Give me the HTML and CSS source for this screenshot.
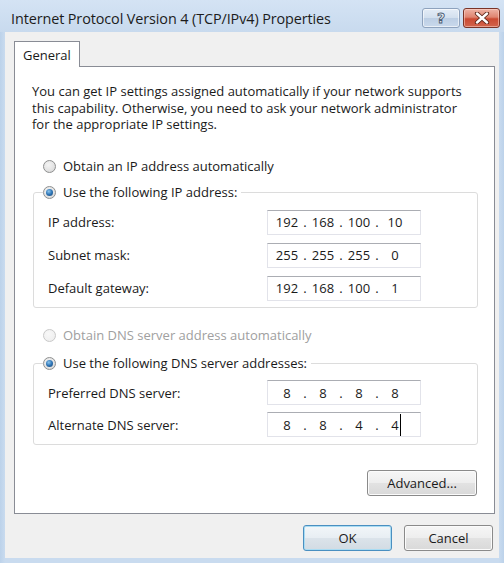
FILE: index.html
```html
<!DOCTYPE html>
<html>
<head>
<meta charset="utf-8">
<link rel="stylesheet" href="styles.css">
</head>
<body>
<div class="window">
  <div class="titlebar">
    <span class="title">Internet Protocol Version 4 (TCP/IPv4) Properties</span>
    <div class="caption-buttons">
      <span class="cbtn help">?</span>
      <span class="cbtn close">
        <svg width="16" height="12" viewBox="0 0 16 12">
          <path d="M3 1.5 L13 10.5 M13 1.5 L3 10.5" stroke="#5a2418" stroke-width="4.2" stroke-linecap="round"/>
          <path d="M3 1.5 L13 10.5 M13 1.5 L3 10.5" stroke="#ffffff" stroke-width="2.4" stroke-linecap="round"/>
        </svg>
      </span>
    </div>
  </div>
  <div class="client">
    <div class="tabs"><div class="tab">General</div></div>
    <div class="panel">
      <p class="intro">You can get IP settings assigned automatically if your network supports<br>this capability. Otherwise, you need to ask your network administrator<br>for the appropriate IP settings.</p>

      <div class="option opt-first"><span class="radio"></span><span>Obtain an IP address automatically</span></div>

      <fieldset class="group group-ip">
        <legend class="option"><span class="radio checked"></span><span>Use the following IP address:</span></legend>
        <div class="row">
          <span class="lbl">IP address:</span>
          <div class="ipbox"><span class="seg">192</span><span class="dot">.</span><span class="seg">168</span><span class="dot">.</span><span class="seg">100</span><span class="dot">.</span><span class="seg">10</span></div>
        </div>
        <div class="row">
          <span class="lbl">Subnet mask:</span>
          <div class="ipbox"><span class="seg">255</span><span class="dot">.</span><span class="seg">255</span><span class="dot">.</span><span class="seg">255</span><span class="dot">.</span><span class="seg">0</span></div>
        </div>
        <div class="row">
          <span class="lbl">Default gateway:</span>
          <div class="ipbox"><span class="seg">192</span><span class="dot">.</span><span class="seg">168</span><span class="dot">.</span><span class="seg">100</span><span class="dot">.</span><span class="seg">1</span></div>
        </div>
      </fieldset>

      <div class="option opt-dns disabled"><span class="radio"></span><span>Obtain DNS server address automatically</span></div>

      <fieldset class="group group-dns">
        <legend class="option"><span class="radio checked"></span><span>Use the following DNS server addresses:</span></legend>
        <div class="row">
          <span class="lbl">Preferred DNS server:</span>
          <div class="ipbox"><span class="seg">8</span><span class="dot">.</span><span class="seg">8</span><span class="dot">.</span><span class="seg">8</span><span class="dot">.</span><span class="seg">8</span></div>
        </div>
        <div class="row">
          <span class="lbl">Alternate DNS server:</span>
          <div class="ipbox"><span class="seg">8</span><span class="dot">.</span><span class="seg">8</span><span class="dot">.</span><span class="seg">4</span><span class="dot">.</span><span class="seg"><span class="caret-host">4</span></span></div>
        </div>
      </fieldset>

      <div class="adv-row"><button class="btn adv">Advanced...</button></div>
    </div>
    <div class="footer">
      <button class="btn ok">OK</button>
      <button class="btn">Cancel</button>
    </div>
  </div>
</div>
</body>
</html>
```

FILE: styles.css
```css
* { box-sizing: border-box; }
html, body { margin: 0; padding: 0; }
body {
  font-family: "Open Sans", "Noto Sans", sans-serif;
  font-size: 13px;
  color: #1a1a1a;
  background: #c6d8ed;
}
.window {
  width: 504px;
  height: 563px;
  display: flex;
  flex-direction: column;
  background: linear-gradient(90deg, #bcd2ea 0, #c9dbef 5px, #c9dbef 499px, #bcd2ea 504px);
}
.titlebar {
  height: 32px;
  flex: none;
  display: flex;
  align-items: center;
  padding: 4px 4px 0 11px;
  background: linear-gradient(#d4e3f4, #c8daee);
}
.title {
  font-size: 14.4px;
  color: #1c1c1c;
  letter-spacing: -0.1px;
}
.caption-buttons {
  margin-left: auto;
  display: flex;
  gap: 3px;
}
.cbtn {
  width: 38px;
  height: 20px;
  border-radius: 3px;
  display: flex;
  align-items: center;
  justify-content: center;
}
.help {
  border: 1px solid #8ea2bd;
  background: linear-gradient(#e4edf7 0%, #d2dfee 50%, #bccee4 51%, #c9d9ec 100%);
  box-shadow: inset 0 0 0 1px rgba(255,255,255,0.6);
  font-family: "DejaVu Sans", sans-serif;
  font-weight: bold;
  font-size: 14px;
  color: #eef3f9;
  -webkit-text-stroke: 0.9px #4a5b72;
  line-height: 1;
}
.close {
  width: 37px;
  border: 1px solid #7a3427;
  background: linear-gradient(#eeb3a5 0%, #df8571 45%, #cb4a32 55%, #d2654d 100%);
  box-shadow: inset 0 0 0 1px rgba(255,220,210,0.5);
}
.client {
  flex: 1;
  margin: 0 5px 5px 5px;
  background: #f0f0f0;
  padding: 9px 4px 0 9px;
  display: flex;
  flex-direction: column;
}
.tabs { display: flex; }
.tab {
  width: 66px;
  height: 26px;
  border: 1px solid #898c95;
  border-bottom: none;
  background: #fff;
  padding-left: 8px;
  display: flex;
  align-items: center;
  margin-bottom: -1px;
  position: relative;
  z-index: 1;
  color: #1a1a1a;
}
.panel {
  height: 448px;
  border: 1px solid #898c95;
  background: #fff;
  padding: 16px 16px 0 0;
  display: flex;
  flex-direction: column;
}
.intro {
  margin: 0 0 25px 17px;
  line-height: 16.5px;
}
.option {
  display: flex;
  align-items: center;
  height: 17px;
  gap: 7px;
}
.opt-first { margin-left: 28px; }
.opt-dns { margin-left: 28px; margin-top: 18.5px; }
.disabled { color: #a0a0a0; }
.radio {
  width: 13px;
  height: 13px;
  border-radius: 50%;
  border: 1px solid #8e8f8f;
  background: radial-gradient(circle at 40% 35%, #f4f4f4 0%, #e2e2e2 60%, #cfcfcf 100%);
  display: flex;
  align-items: center;
  justify-content: center;
  flex: none;
}
.disabled .radio {
  border-color: #c9c9c9;
  background: radial-gradient(circle at 40% 35%, #f8f8f8 0%, #ececec 100%);
}
.radio.checked::after {
  content: "";
  width: 7px;
  height: 7px;
  border-radius: 50%;
  background: radial-gradient(circle at 40% 35%, #8cc6ee 0%, #2e74b5 50%, #17436f 100%);
}
.group {
  margin: 9px 0 0 18px;
  border: 1px solid #dcdcdc;
  border-radius: 3px;
  padding: 9px 56px 6.5px 14px;
  min-inline-size: auto;
  display: flex;
  flex-direction: column;
  gap: 8px;
}
.group legend {
  margin-left: -5px;
  padding: 0 4px 0 0;
  color: #1a1a1a;
}
.group-dns {
  margin-top: 11px;
  padding-top: 8.5px;
  padding-bottom: 7px;
  gap: 7px;
}
.row {
  display: flex;
  align-items: center;
  height: 25px;
}
.lbl {
  width: 219px;
  flex: none;
}
.ipbox {
  width: 155px;
  height: 25px;
  border: 1px solid #e2e3ea;
  border-top-color: #abadb3;
  background: #fff;
  display: flex;
  align-items: center;
  padding-left: 5px;
}
.seg {
  width: 28px;
  text-align: center;
}
.dot {
  width: 8px;
  text-align: center;
}
.caret-host {
  position: relative;
}
.caret-host::after {
  content: "";
  position: absolute;
  right: -2px;
  top: -2px;
  bottom: -2px;
  width: 1px;
  background: #000;
}
.adv-row {
  display: flex;
  justify-content: flex-end;
  margin-top: 25px;
  padding-right: 1px;
}
.btn {
  font-family: "Open Sans", "Noto Sans", sans-serif;
  font-size: 13px;
  color: #1a1a1a;
  height: 26px;
  border: 1px solid #8a8a8a;
  border-radius: 3px;
  background: linear-gradient(#f6f6f6 0%, #eeeeee 48%, #e2e2e2 52%, #d9d9d9 100%);
  box-shadow: inset 0 0 0 1px #fbfbfb;
  padding: 0;
}
.adv { width: 110px; }
.footer {
  display: flex;
  justify-content: flex-end;
  gap: 12px;
  margin-top: 11px;
  padding-right: 2px;
}
.footer .btn { width: 89px; }
.ok {
  border-color: #4a8fc0;
  box-shadow: inset 0 0 0 1px #a9dcf3;
  background: linear-gradient(#f2f6f9 0%, #e8eef3 48%, #dbe3ea 52%, #d2dbe3 100%);
}
```
